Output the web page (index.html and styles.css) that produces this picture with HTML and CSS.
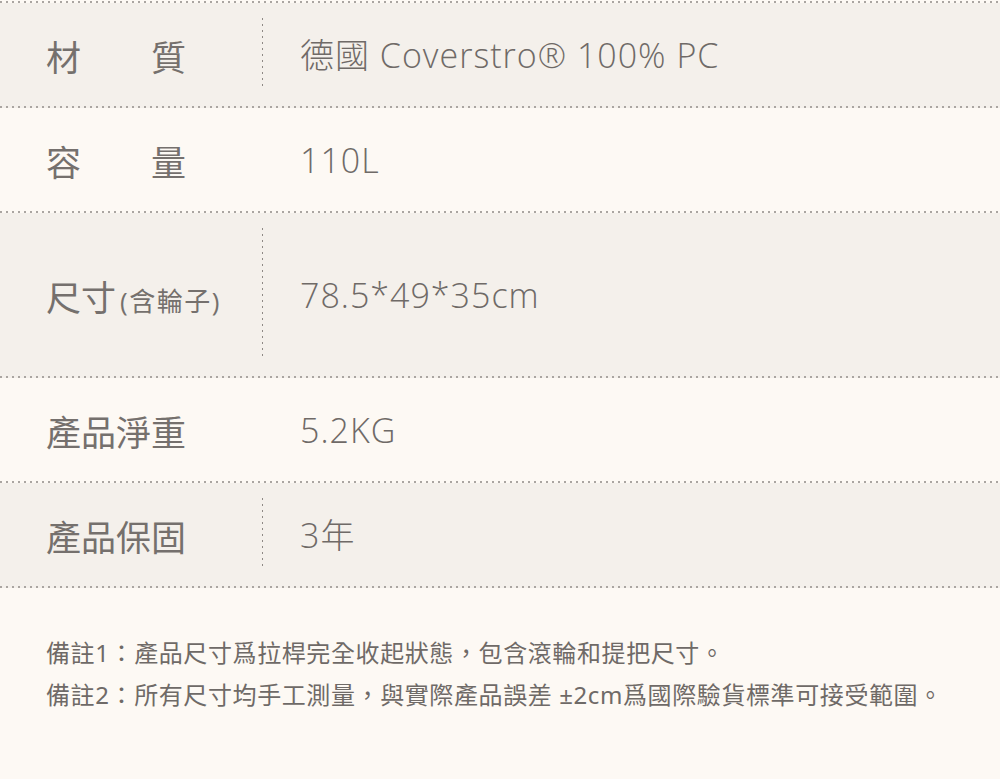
FILE: index.html
```html
<!DOCTYPE html>
<html lang="zh-Hant">
<head>
    <meta charset="UTF-8">
    <meta name="viewport" content="width=device-width, initial-scale=1.0">
    <title>產品規格</title>
    <link rel="stylesheet" href="styles.css">
</head>
<body>
    <div class="spec">
        <div class="spec-row shade">
            <div class="spec-label"><span class="spread">材質</span></div>
            <i class="divider"></i>
            <div class="spec-value">德國 Coverstro® 100% PC</div>
        </div>
        <div class="spec-row">
            <div class="spec-label"><span class="spread">容量</span></div>
            <i class="divider"></i>
            <div class="spec-value">110L</div>
        </div>
        <div class="spec-row shade tall">
            <div class="spec-label">尺寸<small>(含輪子)</small></div>
            <i class="divider"></i>
            <div class="spec-value">78.5*49*35cm</div>
        </div>
        <div class="spec-row">
            <div class="spec-label">產品淨重</div>
            <i class="divider"></i>
            <div class="spec-value">5.2KG</div>
        </div>
        <div class="spec-row shade">
            <div class="spec-label">產品保固</div>
            <i class="divider"></i>
            <div class="spec-value">3年</div>
        </div>
    </div>
    <div class="notes">
        <p>備註1：產品尺寸爲拉桿完全收起狀態，包含滾輪和提把尺寸。</p>
        <p>備註2：所有尺寸均手工測量，與實際產品誤差 ±2cm爲國際驗貨標準可接受範圍。</p>
    </div>
</body>
</html>
```

FILE: styles.css
```css
body {
    margin: 0;
    background-color: #fdf9f4;
    color: #6f6a67;
    font-family: "Noto Sans", "Noto Sans CJK TC", sans-serif;
}
.spec {
    margin-top: 1px;
    padding-top: 2px;
    background: linear-gradient(to right, #aaa5a1 2px, transparent 2px) 0 0 / 6px 2px repeat-x;
}
.spec-row {
    display: flex;
    align-items: center;
    height: 105px;
    box-sizing: border-box;
    background: linear-gradient(to right, #aaa5a1 2px, transparent 2px) 0 100% / 6px 2px repeat-x;
}
.spec-row.shade {
    background-color: #f4f0eb;
}
.spec-row.tall {
    height: 165px;
}
.spec-label {
    width: 216px;
    padding-left: 46px;
    font-size: 35px;
    line-height: 1.4;
    color: #75706d;
    font-family: "Noto Sans CJK TC", sans-serif;
}
.spec-label small {
    margin-left: 4px;
    font-family: "Open Sans", "Noto Sans CJK TC", sans-serif;
    font-size: 26px;
    letter-spacing: 1.5px;
}
.spread {
    display: inline-block;
    width: 140px;
    text-align: justify;
    text-align-last: justify;
}
.divider {
    align-self: stretch;
    width: 1px;
    margin: 15px 0 22px;
}
.shade .divider {
    background: linear-gradient(to bottom, #8e8985 2px, transparent 2px) 0 0 / 1px 6px repeat-y;
}
.spec-value {
    padding-left: 37px;
    font-family: "Open Sans", "Noto Sans CJK TC", sans-serif;
    font-weight: 300;
    font-size: 34px;
    letter-spacing: 1px;
    line-height: 1.4;
}
.notes {
    padding: 44px 0 0 46px;
    font-size: 24px;
    letter-spacing: 0.6px;
    line-height: 42px;
}
.notes p {
    margin: 0;
}
```
